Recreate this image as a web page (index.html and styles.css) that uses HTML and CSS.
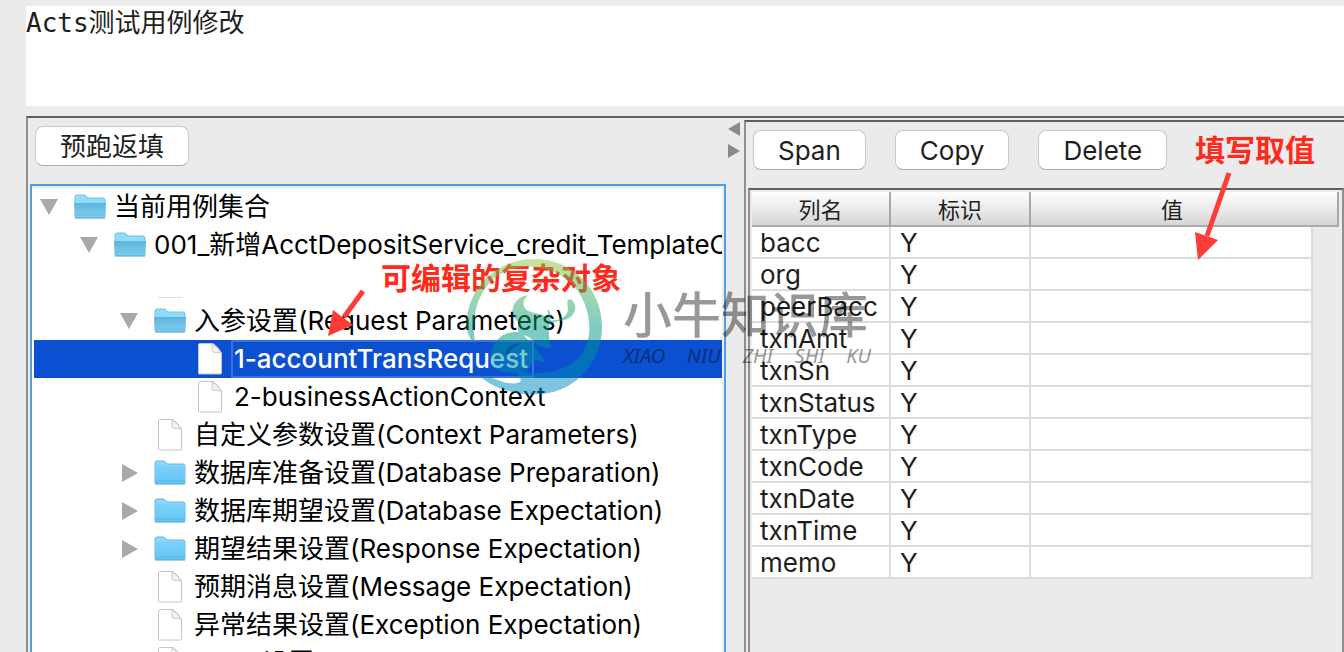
FILE: index.html
```html
<!DOCTYPE html>
<html lang="zh-CN">
<head>
<meta charset="utf-8">
<title>Acts测试用例修改</title>
<link rel="stylesheet" href="styles.css">
</head>
<body>
<svg class="defs" aria-hidden="true">
  <defs>
    <linearGradient id="fold-open" x1="0" y1="0" x2="0" y2="1">
      <stop offset="0" stop-color="#5cb4dc"/><stop offset="1" stop-color="#80cff0"/>
    </linearGradient>
    <linearGradient id="fold-shut" x1="0" y1="0" x2="0" y2="1">
      <stop offset="0" stop-color="#7dd0fa"/><stop offset="1" stop-color="#62c5f6"/>
    </linearGradient>
  </defs>
  <symbol id="folder-open" viewBox="0 0 32 26">
    <path d="M1 23V3q0-2 2-2h7q1 0 2 1l2 2h15q2 0 2 2v17z" fill="#8fdcfd" stroke="#71c1e4"/>
    <path d="M0 9h32l-1 15H1z" fill="url(#fold-open)"/>
    <path d="M1 24h30" stroke="#4b9fc6" stroke-width="1"/><path d="M1 21h30" stroke="#6abce2"/>
  </symbol>
  <symbol id="folder-shut" viewBox="0 0 32 26">
    <path d="M1 23V3q0-2 2-2h6q1 0 2 1l2 2h16q2 0 2 2v17z" fill="#88d8fb" stroke="#62b7df"/>
    <path d="M1 6h30v18H1z" fill="url(#fold-shut)"/>
    <path d="M1 24h30" stroke="#4fa6d0"/><path d="M1 21h30" stroke="#58b9e6"/>
  </symbol>
  <symbol id="page" viewBox="0 0 24 32">
    <path d="M.5 2q0-1.500 1.500-1.500h13q5 3 8.500 9.500v20q0 1-1 1H1.500q-1 0-1-1z" fill="#fff" stroke="#c6c6c6"/>
    <path d="M14 1v7q0 1 1 1l8 1q-3-6-9-9z" fill="#f2f2f2" stroke="#cccccc"/>
  </symbol>
  <symbol id="tri-down" viewBox="0 0 20 20"><path d="M0 2h18L9 18z" fill="#a9a9a9"/></symbol>
  <symbol id="tri-right" viewBox="0 0 20 20"><path d="M2 1v18l16-9z" fill="#a9a9a9"/></symbol>
</svg>

<main class="window">
  <textarea class="notes" aria-label="说明" spellcheck="false">Acts测试用例修改</textarea>

  <div class="split">
    <section class="left">
      <div class="toolbar toolbar-left"><button class="btn" type="button">预跑返填</button></div>
      <ul class="tree" role="tree" aria-label="当前用例集合">
        <li class="row level-0" role="treeitem"><button class="toggle" type="button" aria-label="折叠"><svg><use href="#tri-down"/></svg></button><svg class="folder"><use href="#folder-open"/></svg><span class="label">当前用例集合</span></li>
        <li class="row level-1" role="treeitem"><button class="toggle" type="button" aria-label="折叠"><svg><use href="#tri-down"/></svg></button><svg class="folder"><use href="#folder-open"/></svg><span class="label">001_新增AcctDepositService_credit_TemplateC</span></li>
        <li class="row row-blank" role="presentation"><span class="sliver"></span></li>
        <li class="row level-2" role="treeitem"><button class="toggle" type="button" aria-label="折叠"><svg><use href="#tri-down"/></svg></button><svg class="folder"><use href="#folder-open"/></svg><span class="label">入参设置(Request Parameters)</span></li>
        <li class="row level-3 selected" role="treeitem" aria-selected="true"><span class="toggle"></span><svg class="page"><use href="#page"/></svg><span class="label">1-accountTransRequest</span></li>
        <li class="row level-3" role="treeitem"><span class="toggle"></span><svg class="page"><use href="#page"/></svg><span class="label">2-businessActionContext</span></li>
        <li class="row level-2" role="treeitem"><span class="toggle"></span><svg class="page"><use href="#page"/></svg><span class="label">自定义参数设置(Context Parameters)</span></li>
        <li class="row level-2" role="treeitem"><button class="toggle" type="button" aria-label="展开"><svg><use href="#tri-right"/></svg></button><svg class="folder"><use href="#folder-shut"/></svg><span class="label">数据库准备设置(Database Preparation)</span></li>
        <li class="row level-2" role="treeitem"><button class="toggle" type="button" aria-label="展开"><svg><use href="#tri-right"/></svg></button><svg class="folder"><use href="#folder-shut"/></svg><span class="label">数据库期望设置(Database Expectation)</span></li>
        <li class="row level-2" role="treeitem"><button class="toggle" type="button" aria-label="展开"><svg><use href="#tri-right"/></svg></button><svg class="folder"><use href="#folder-shut"/></svg><span class="label">期望结果设置(Response Expectation)</span></li>
        <li class="row level-2" role="treeitem"><span class="toggle"></span><svg class="page"><use href="#page"/></svg><span class="label">预期消息设置(Message Expectation)</span></li>
        <li class="row level-2" role="treeitem"><span class="toggle"></span><svg class="page"><use href="#page"/></svg><span class="label">异常结果设置(Exception Expectation)</span></li>
        <li class="row level-2" role="treeitem"><span class="toggle"></span><svg class="page"><use href="#page"/></svg><span class="label">Mock设置</span></li>
      </ul>
    </section>

    <div class="splitter">
      <button type="button" aria-label="收起左侧"><svg viewBox="0 0 12 14"><path d="M12 0v14L0 7z" fill="#8a8a8a"/></svg></button>
      <button type="button" aria-label="收起右侧"><svg viewBox="0 0 12 14"><path d="M0 0v14l12-7z" fill="#8a8a8a"/></svg></button>
    </div>

    <section class="right">
      <div class="toolbar toolbar-right">
        <button class="btn" type="button">Span</button>
        <button class="btn" type="button">Copy</button>
        <button class="btn" type="button">Delete</button>
      </div>
      <div class="scroll">
        <table class="grid">
          <colgroup><col class="col-name"><col class="col-flag"><col><col class="col-rest"></colgroup>
          <thead><tr><th scope="col">列名</th><th scope="col">标识</th><th scope="col" class="open">值</th><td></td></tr></thead>
          <tbody>
            <tr><td>bacc</td><td>Y</td><td></td><td></td></tr>
            <tr><td>org</td><td>Y</td><td></td><td></td></tr>
            <tr><td>peerBacc</td><td>Y</td><td></td><td></td></tr>
            <tr><td>txnAmt</td><td>Y</td><td></td><td></td></tr>
            <tr><td>txnSn</td><td>Y</td><td></td><td></td></tr>
            <tr><td>txnStatus</td><td>Y</td><td></td><td></td></tr>
            <tr><td>txnType</td><td>Y</td><td></td><td></td></tr>
            <tr><td>txnCode</td><td>Y</td><td></td><td></td></tr>
            <tr><td>txnDate</td><td>Y</td><td></td><td></td></tr>
            <tr><td>txnTime</td><td>Y</td><td></td><td></td></tr>
            <tr><td>memo</td><td>Y</td><td></td><td></td></tr>
          </tbody>
        </table>
      </div>
    </section>
  </div>

  <p class="callout callout-tree">可编辑的复杂对象</p>
  <svg class="arrow arrow-tree" viewBox="0 0 40 50" aria-hidden="true"><path d="M37 4L18 30" stroke="#ff3b38" stroke-width="5"/><path d="M2 49L7 23l20 15z" fill="#ff3b38"/></svg>
  <p class="callout callout-value">填写取值</p>
  <svg class="arrow arrow-value" viewBox="0 0 40 92" aria-hidden="true"><path d="M35 3L13 66" stroke="#ff3b38" stroke-width="5"/><path d="M4 90L1 62l23 8z" fill="#ff3b38"/></svg>

  <div class="watermark" aria-hidden="true">
    <svg class="bull" viewBox="0 0 480 480">
      <defs><linearGradient id="wm" x1="0" y1="0" x2="0" y2="1"><stop offset="0" stop-color="#93c83e"/><stop offset=".5" stop-color="#009b84"/><stop offset="1" stop-color="#0088c6"/></linearGradient></defs>
      <path fill="url(#wm)" fill-rule="evenodd" d="M62 283C46 275 33 240 35 218C40 110 126 27 238 27C352 27 441 116 441 230C441 344 352 433 240 433C168 433 105 410 72 376C108 382 120 388 143 395C166 402 190 402 197 394C199 385 192 376 184 368C160 370 131 366 116 352C101 325 108 281 137 260C154 247 177 246 192 246C185 238 188 226 193 218C176 206 170 191 173 176C178 151 198 138 219 136C202 150 201 168 216 181C233 191 258 190 280 203C277 191 278 183 279 176C288 188 289 199 286 211C308 213 330 205 337 187C342 174 334 164 338 151C345 142 360 155 361 171C360 192 346 208 322 211C308 213 296 217 284 224C282 246 278 258 290 292C277 298 263 292 250 286C239 280 232 263 207 255C216 270 227 276 238 287C247 302 257 313 270 336C257 335 246 332 236 326C234 350 215 360 203 367C270 376 330 361 369 326C426 268 406 157 350 100C290 42 181 28 110 92C67 134 45 206 62 283Z"/>
      <path d="M150 310Q164 280 201 279Q169 291 158 316Z" fill="#005a78"/>
    </svg>
    <div class="brand">
      <div class="brand-cn">小牛知识库</div>
      <div class="brand-en"><span>XIAO</span><span>NIU</span><span>ZHI</span><span>SHI</span><span>KU</span></div>
    </div>
  </div>
</main>
</body>
</html>
```
FILE: styles.css
```css
* { box-sizing: border-box; }
body {
  margin: 0;
  background: #ebebeb;
  color: #1e1e1e;
  font: 26px/32px Inter, "Noto Sans CJK SC", sans-serif;
}
button { font: inherit; color: inherit; }
svg { display: block; }
.defs { position: absolute; width: 0; height: 0; }

.window {
  position: relative;
  display: flex;
  flex-direction: column;
  height: 100vh;
  padding: 6px 0 0 26px;
  overflow: hidden;
}
.notes {
  flex: none;
  height: 100px;
  margin: 0 0 10px;
  padding: 0;
  border: 0;
  outline: 0;
  resize: none;
  background: #fff;
  color: #1e1e1e;
  font: 26px/34px "DejaVu Sans Mono", "Noto Sans CJK SC", monospace;
}

.split {
  flex: 1;
  min-height: 0;
  display: grid;
  grid-template-columns: minmax(0, 698fr) 18px minmax(0, 600fr);
  border-top: 2px solid #5f5f5f;
  border-left: 2px solid #8f8f8f;
}
.left { display: flex; flex-direction: column; min-height: 0; padding: 8px 0 0 2px; }
.toolbar { flex: none; display: flex; }
.toolbar-left { padding: 0 5px; margin-bottom: 18px; }
.btn {
  height: 40px;
  padding: 2px 24px 0;
  border: 1px solid #c8c8c8;
  border-bottom-color: #acacac;
  border-radius: 8px;
  background: #fff;
  line-height: 36px;
}

.tree {
  flex: 1;
  min-height: 0;
  margin: 0;
  padding: 2px;
  overflow: hidden;
  list-style: none;
  border: 2px solid #4f9fe2;
  border-bottom: 0;
  background: #fff;
  box-shadow: inset -2px 2px #ededed;
  color: #000;
}
.row {
  display: flex;
  align-items: center;
  gap: 8px;
  height: 38px;
  overflow: hidden;
  white-space: nowrap;
}
.level-0 { padding-left: 6px; }
.level-1 { padding-left: 46px; }
.level-2 { padding-left: 86px; }
.level-3 { padding-left: 126px; }
.toggle { flex: none; width: 26px; height: 20px; padding: 0; border: 0; background: none; }
.toggle svg { width: 20px; height: 20px; }
.folder { flex: none; width: 32px; height: 26px; }
.page { flex: none; width: 24px; height: 32px; margin: 0 4px; }
.label { flex: none; }
.row-blank { align-items: flex-end; padding: 0 0 4px 124px; }
.sliver { width: 24px; height: 1px; background: #dcdcdc; }
.selected { background: #0b50d0; color: #fff; font-weight: 500; }
.selected .label { margin-left: -3px; padding: 0 4px 0 1px; border: 2px solid #3a72da; line-height: 34px; }

.splitter { display: flex; flex-direction: column; gap: 8px; padding: 4px 0 0 2px; }
.splitter button { width: 12px; height: 14px; padding: 0; border: 0; background: none; }
.splitter svg { width: 12px; height: 14px; }

.right {
  display: flex;
  flex-direction: column;
  min-height: 0;
  margin-top: 2px;
  padding: 8px 0 0 2px;
  border-top: 2px solid #5f5f5f;
  border-left: 2px solid #8f8f8f;
}
.toolbar-right { gap: 29px; padding: 0 5px; margin-bottom: 18px; }
.scroll {
  flex: 1;
  min-height: 0;
  padding: 2px 3px 0 2px;
  border: solid #8f8f8f;
  border-width: 2px 2px 0;
  border-top-color: #5f5f5f;
}
.grid { width: 100%; table-layout: fixed; border-collapse: separate; border-spacing: 0; }
.col-name { width: 139px; }
.col-flag { width: 140px; }
.col-rest { width: 26px; }
.grid thead th, .grid thead td {
  height: 35px;
  padding: 2px 0 0;
  border-right: 2px solid #a8a8a8;
  border-bottom: 2px solid #ababab;
  background: linear-gradient(#fff, #d6d6d6);
  font-size: 22px;
  font-weight: 400;
  line-height: 30px;
}
.grid thead .open { border-right: 0; }
.grid tbody td {
  height: 32px;
  padding: 1px 9px 0;
  border-right: 2px solid #dcdcdc;
  border-bottom: 2px solid #dcdcdc;
  background: #fff;
  line-height: 29px;
}
.grid tbody td:first-child { padding-left: 8px; }
.grid tbody td:last-child { border: 0; background: none; }

.callout {
  position: absolute;
  margin: 0;
  color: #ff2a1c;
  font-size: 30px;
  font-weight: 700;
  line-height: 40px;
  white-space: nowrap;
}
.callout-tree { left: 381px; top: 258px; }
.callout-value { left: 1195px; top: 130px; }
.arrow { position: absolute; }
.arrow-tree { left: 326px; top: 287px; width: 40px; height: 50px; }
.arrow-value { left: 1194px; top: 170px; width: 40px; height: 92px; }

.watermark {
  position: absolute;
  left: 455px;
  top: 250px;
  display: flex;
  gap: 8px;
  pointer-events: none;
}
.bull { width: 160px; height: 160px; opacity: .5; }
.brand { width: 248px; padding-top: 36px; color: #000; opacity: .4; }
.brand-cn { font-size: 49px; font-weight: 500; line-height: 60px; white-space: nowrap; }
.brand-en {
  display: flex;
  justify-content: space-between;
  font: italic 20px/20px "Noto Sans", sans-serif;
}
```
